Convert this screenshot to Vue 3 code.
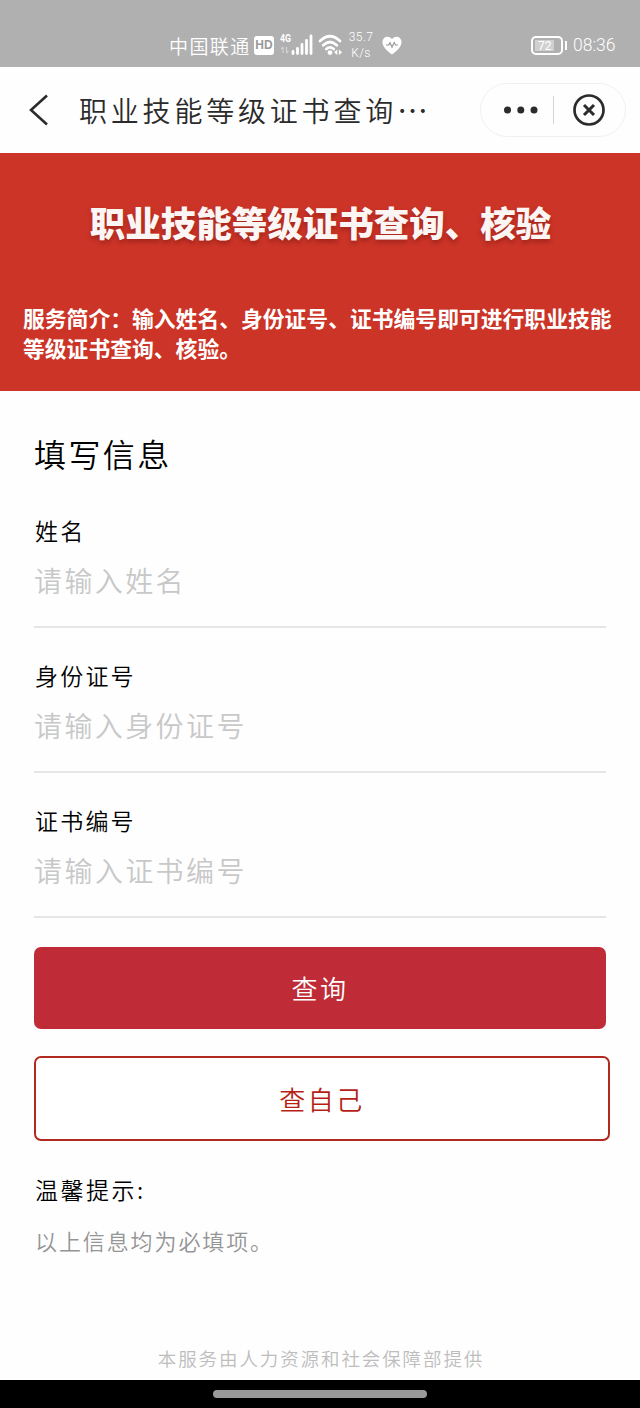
<script setup>
import { ref } from 'vue'

const fields = ref([
  { key: 'name', label: '姓名', placeholder: '请输入姓名', value: '' },
  { key: 'idCard', label: '身份证号', placeholder: '请输入身份证号', value: '' },
  { key: 'certNo', label: '证书编号', placeholder: '请输入证书编号', value: '' }
])
</script>

<template>
  <div class="page">
    <div class="status-bar">
      <div class="status-left">
        <span class="carrier">中国联通</span>
        <span class="hd">HD</span>
        <div class="signal">
          <span class="signal-type">4G</span>
          <svg width="33" height="24" viewBox="0 0 33 24">
            <path d="M3 14v6M1 16l2-2M6.500 14v6M8.500 18l-2 2" stroke="#d2d2d2" stroke-width="1.2" fill="none" />
            <path d="M13 18.500v2M17.5 15.5v5M22 11.500v9M26.5 7.500v13M31 3v17.500" stroke="#fff" stroke-width="2.8" stroke-linecap="round" />
          </svg>
        </div>
        <svg class="wifi" width="25" height="22" viewBox="0 0 25 22">
          <g fill="none" stroke="#fff" stroke-width="2.7" stroke-linecap="round">
            <path d="M2 7Q12 -2.5 22 7" />
            <path d="M5.2 11.2Q12 4.8 18.8 11.2" />
            <path d="M8.3 15Q12 11.6 15.7 15" />
          </g>
          <circle cx="12" cy="18.6" r="2.4" fill="#fff" />
          <path d="M19.3 15.5v5.6l-3.2-2.8zM20.9 15.5v5.6l3.2-2.8z" fill="#fff" />
        </svg>
        <div class="speed">
          <span>35.7</span>
          <span>K/s</span>
        </div>
        <svg class="heart" width="20" height="19" viewBox="0 0 20 19">
          <path d="M10 18.5C7.5 16.3.5 12 .5 6.2.5 2.8 2.9.8 5.5.8 7.5.8 9.2 1.8 10 3.3 10.8 1.8 12.5.8 14.5.8c2.6 0 5 2 5 5.4 0 5.8-7 10.1-9.5 12.3z" fill="#fff" />
          <path d="M4 9h2.5l1.5-2.200 2 4.200 2.200-4.500L13.500 9H16" stroke="#999" stroke-width="1.2" fill="none" />
        </svg>
      </div>
      <div class="status-right">
        <div class="battery"><span>72</span></div>
        <i class="battery-cap"></i>
        <span class="time">08:36</span>
      </div>
    </div>

    <header class="nav-bar">
      <svg class="back" width="20" height="32" viewBox="0 0 20 32">
        <path d="M18 1.5L2 16L18 30.5" stroke="#2b2b2b" stroke-width="2.6" fill="none" />
      </svg>
      <h1 class="nav-title">职业技能等级证书查询<span class="dots">⋯</span></h1>
      <div class="capsule">
        <svg width="36" height="8" viewBox="0 0 36 8">
          <circle cx="4.5" cy="4" r="3.5" fill="#2b2b2b" />
          <circle cx="17.8" cy="4" r="3.5" fill="#2b2b2b" />
          <circle cx="31" cy="4" r="3.5" fill="#2b2b2b" />
        </svg>
        <i class="divider"></i>
        <svg width="32" height="32" viewBox="0 0 32 32" fill="none" stroke="#2b2b2b">
          <circle cx="16" cy="16" r="14.5" stroke-width="2.7" />
          <path d="M11 11l10 10M21 11L11 21" stroke-width="3" />
        </svg>
      </div>
    </header>

    <section class="banner">
      <h2>职业技能等级证书查询、核验</h2>
      <p>服务简介：输入姓名、身份证号、证书编号即可进行职业技能等级证书查询、核验。</p>
    </section>

    <main class="content">
      <h3 class="form-title">填写信息</h3>
      <div v-for="field in fields" :key="field.key" class="field">
        <label :for="field.key">{{ field.label }}</label>
        <input :id="field.key" v-model="field.value" type="text" :placeholder="field.placeholder" />
      </div>
      <button class="btn btn-primary">查询</button>
      <button class="btn btn-outline">查自己</button>
      <div class="tips-title">温馨提示:</div>
      <p class="tips-text">以上信息均为必填项。</p>
    </main>

    <footer class="footer">本服务由人力资源和社会保障部提供</footer>
    <div class="home-bar"><i></i></div>
  </div>
</template>

<style>
body {
  margin: 0;
  background: #fff;
}
</style>

<style scoped>
* {
  box-sizing: border-box;
}

.page {
  width: 640px;
  height: 1408px;
  display: flex;
  flex-direction: column;
  overflow: hidden;
  background: #fefefe;
  font-family: "Noto Sans CJK SC", sans-serif;
  font-weight: 350;
}

h1, h2, h3, p {
  margin: 0;
  font-weight: inherit;
}

.status-bar {
  height: 67px;
  flex-shrink: 0;
  padding: 22px 24px 0 169px;
  display: flex;
  justify-content: space-between;
  background: #b0b0b0;
  color: #fff;
}

.status-left,
.status-right {
  height: 46px;
  display: flex;
  align-items: center;
}

.carrier {
  width: 85px;
  font-size: 19px;
  letter-spacing: 1.4px;
  white-space: nowrap;
}

.hd {
  width: 20px;
  height: 19px;
  border-radius: 3px;
  background: #fff;
  color: #999;
  font: bold 12px/19px "Liberation Sans", sans-serif;
  text-align: center;
}

.signal {
  position: relative;
  width: 33px;
  height: 24px;
  margin-left: 6px;
}

.signal-type {
  position: absolute;
  left: 0;
  top: 0;
  font: bold 11px/11px "Roboto", sans-serif;
  transform: scaleX(0.8);
  transform-origin: left;
}

.wifi {
  margin-left: 5px;
}

.speed {
  width: 28px;
  margin-left: 4px;
  display: flex;
  flex-direction: column;
  align-items: center;
  font: 300 12px/16px "Roboto", sans-serif;
  letter-spacing: 0.4px;
}

.heart {
  margin-left: 7px;
}

.battery {
  width: 32px;
  height: 19px;
  padding: 2px;
  border: 2px solid #fff;
  border-radius: 5px;
}

.battery span {
  display: block;
  width: 19px;
  height: 11px;
  padding-left: 3px;
  background: #d0d0d0;
  font: 12px/12px "Roboto", sans-serif;
}

.battery-cap {
  width: 2px;
  height: 9px;
  margin-left: 2px;
  background: #fff;
}

.time {
  width: 43px;
  margin-left: 6px;
  font: 300 17.5px/20px "Roboto", sans-serif;
  white-space: nowrap;
}

.nav-bar {
  height: 86px;
  flex-shrink: 0;
  padding: 0 14px 0 29px;
  display: flex;
  align-items: center;
  color: #2b2b2b;
}

.nav-title {
  margin-left: 30px;
  font-size: 28px;
  line-height: 40px;
  letter-spacing: 3.8px;
  white-space: nowrap;
}

.dots {
  font-size: 31px;
  line-height: 1;
}

.capsule {
  width: 146px;
  height: 54px;
  margin-left: auto;
  padding: 0 20px 0 22px;
  display: flex;
  align-items: center;
  justify-content: space-between;
  border: 1px solid #f1f1f1;
  border-radius: 27px;
}

.divider {
  width: 1px;
  height: 28px;
  margin-right: 6px;
  background: #d5d5d5;
}

.banner {
  height: 238px;
  flex-shrink: 0;
  padding: 43px 22px 0 23px;
  background: #cb3427;
  color: #fff;
}

.banner h2 {
  color: #fbf5f4;
  font-size: 35.5px;
  font-weight: 900;
  line-height: 52px;
  text-align: center;
  white-space: nowrap;
  text-shadow: 0 3px 4px rgba(90, 10, 5, 0.35);
}

.banner p {
  margin-top: 55px;
  font-size: 21.8px;
  font-weight: 700;
  line-height: 30px;
}

.content {
  padding: 37px 30px 0 34px;
  display: flex;
  flex-direction: column;
  color: #000;
}

.form-title {
  margin-bottom: 37px;
  font-size: 32px;
  line-height: 50px;
  letter-spacing: 2.4px;
}

.field {
  width: 572px;
  margin-bottom: 32px;
  display: flex;
  flex-direction: column;
}

.field label {
  padding-left: 1px;
  font-size: 23px;
  line-height: 30px;
  letter-spacing: 2.2px;
}

.field input {
  height: 83px;
  padding: 0 0 12px;
  border: 0;
  border-bottom: 2px solid #e6e6e6;
  outline: none;
  background: transparent;
  font: inherit;
  font-size: 28px;
  letter-spacing: 2.4px;
}

.field input::placeholder {
  color: #c8c8c8;
  opacity: 1;
}

.btn {
  height: 82px;
  padding: 0 0 1px;
  border: 0;
  border-radius: 7px;
  font-family: inherit;
  font-size: 26px;
  font-weight: 350;
  letter-spacing: 2.5px;
}

.btn-primary {
  width: 572px;
  margin-top: -3px;
  background: #bf2b37;
  color: #fff;
}

.btn-outline {
  width: 576px;
  height: 85px;
  margin-top: 27px;
  border: 2px solid #b02a20;
  background: #fff;
  color: #b51f16;
}

.tips-title {
  margin-top: 33px;
  padding-left: 1px;
  font-size: 23px;
  line-height: 30px;
  letter-spacing: 2.5px;
}

.tips-text {
  margin-top: 21px;
  padding-left: 1px;
  color: #959595;
  font-size: 22px;
  line-height: 30px;
  letter-spacing: 1.9px;
}

.footer {
  margin-top: auto;
  height: 43px;
  flex-shrink: 0;
  padding-left: 2px;
  color: #bdbdbd;
  font-size: 18.5px;
  line-height: 42px;
  letter-spacing: 1.9px;
  text-align: center;
}

.home-bar {
  height: 28px;
  flex-shrink: 0;
  display: flex;
  align-items: center;
  justify-content: center;
  background: #000;
}

.home-bar i {
  width: 214px;
  height: 8px;
  border-radius: 4px;
  background: #999;
}
</style>
